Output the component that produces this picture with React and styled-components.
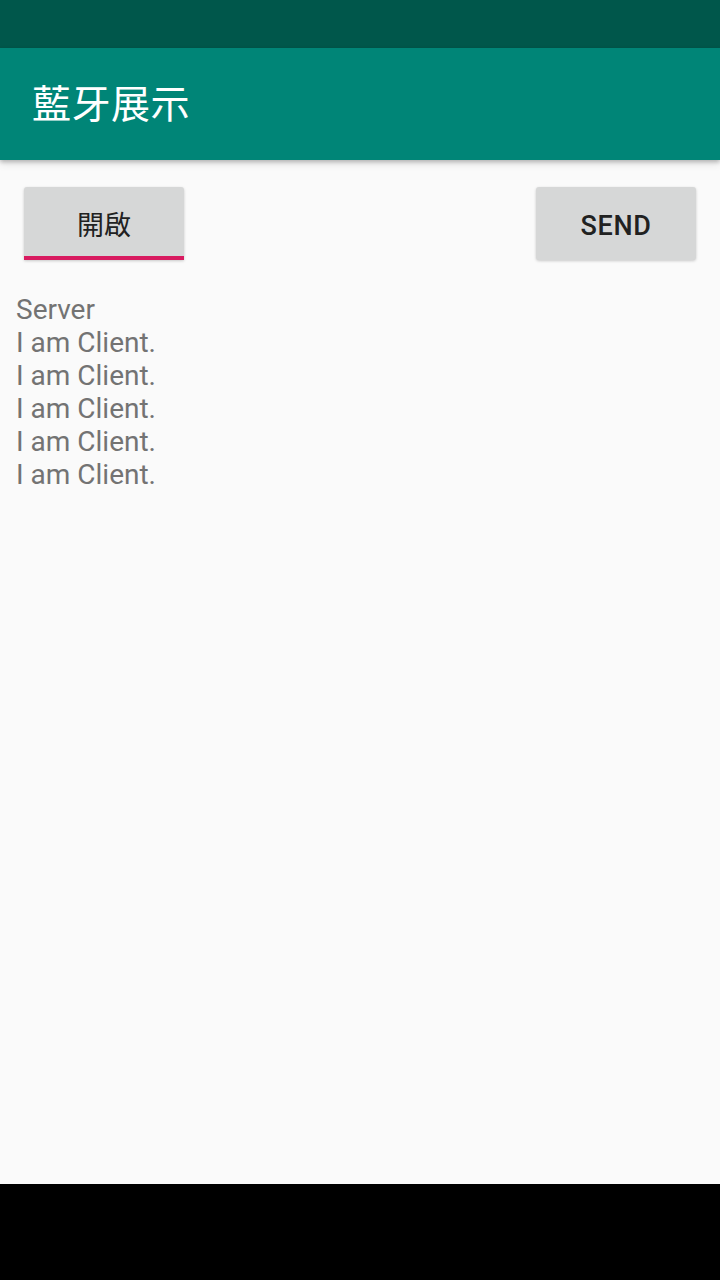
import React from "react";
import styled, { createGlobalStyle } from "styled-components";

const Global = createGlobalStyle`
  html, body { margin: 0; padding: 0; }
  body { background: #fafafa; font-family: Roboto, "Noto Sans CJK TC", sans-serif; }
  #root { height: 1280px; }
`;

const Screen = styled.div`
  width: 720px;
  height: 1280px;
  display: flex;
  flex-direction: column;
  background: #fafafa;
  overflow: hidden;
`;

const StatusBar = styled.div`
  height: 48px;
  flex: none;
  background: #00574b;
`;

const AppBar = styled.header`
  height: 112px;
  flex: none;
  background: #008577;
  display: flex;
  align-items: center;
  padding-left: 32px;
  box-shadow: 0 2px 4px rgba(0,0,0,0.22), 0 4px 8px rgba(0,0,0,0.1);
  position: relative;
  z-index: 1;
`;

const Title = styled.h1`
  margin: 0;
  color: #fff;
  font-family: Roboto, "Noto Sans CJK TC", sans-serif;
  font-weight: 400;
  font-size: 39px;
  letter-spacing: 0.5px;
  line-height: 1;
  margin-top: 2px;
`;

const Content = styled.main`
  flex: 1;
  padding: 27px 24px 0 16px;
  display: flex;
  flex-direction: column;
`;

const ButtonRow = styled.div`
  display: flex;
  justify-content: space-between;
  padding-left: 8px;
`;

const Button = styled.button`
  width: 160px;
  height: 73px;
  border: none;
  background: #d6d7d7;
  color: #212121;
  font-family: Roboto, "Noto Sans CJK TC", sans-serif;
  font-size: ${p => (p.$cjk ? "27px" : "27px")};
  font-weight: ${p => (p.$cjk ? 400 : 500)};
  letter-spacing: ${p => (p.$cjk ? "0" : "0.6px")};
  box-shadow: 0 1px 3px rgba(0,0,0,0.2);
  display: flex;
  align-items: center;
  justify-content: center;
  padding: ${p => (p.$focused ? "4px 0 0" : "4px 0 0")};
  border-bottom: ${p => (p.$focused ? "4px solid #d81b60" : "none")};
  border-radius: ${p => (p.$focused ? "3px 3px 0 0" : "3px")};
  box-sizing: border-box;
`;

const Log = styled.div`
  margin-top: 33px;
  color: #737373;
  font-family: Roboto, sans-serif;
  font-size: 28px;
  line-height: 33px;
`;

const Line = styled.div``;

const NavBar = styled.div`
  height: 96px;
  flex: none;
  background: #000;
`;

export default function App() {
  const lines = ["Server", "I am Client.", "I am Client.", "I am Client.", "I am Client.", "I am Client."];
  return (
    <>
      <Global />
      <Screen>
        <StatusBar />
        <AppBar>
          <Title>藍牙展示</Title>
        </AppBar>
        <Content>
          <ButtonRow>
            <Button $cjk $focused>開啟</Button>
            <Button>SEND</Button>
          </ButtonRow>
          <Log>
            {lines.map((l, i) => (
              <Line key={i}>{l}</Line>
            ))}
          </Log>
        </Content>
        <NavBar />
      </Screen>
    </>
  );
}
